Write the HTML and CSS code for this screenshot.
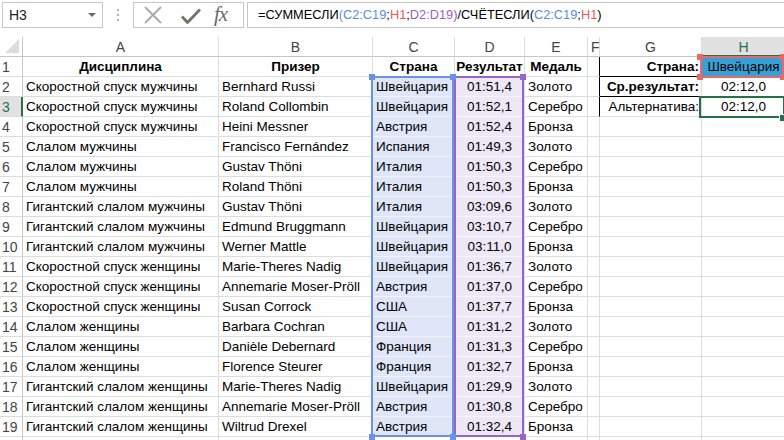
FILE: index.html
```html
<!DOCTYPE html>
<html lang="ru">
<head>
    <meta charset="UTF-8">
    <title>Олимпиада 1972 — горные лыжи</title>
    <link rel="stylesheet" href="styles.css">
</head>
<body>
    <div class="toolbar">
        <div class="namebox">
            <span>H3</span>
            <span class="caret"></span>
        </div>
        <div class="grip">
            <svg width="4" height="14" viewBox="0 0 4 14"><circle cx="2" cy="2" r="1" fill="#9a9a9a"/><circle cx="2" cy="7" r="1" fill="#9a9a9a"/><circle cx="2" cy="12" r="1" fill="#9a9a9a"/></svg>
        </div>
        <div class="fx-buttons">
            <svg class="btn-cancel" width="18" height="18" viewBox="0 0 18 18"><path d="M1 1 L17 17 M17 1 L1 17" stroke="#a8a8a8" stroke-width="1.8" fill="none"/></svg>
            <svg class="btn-enter" width="20" height="16" viewBox="0 0 20 16"><path d="M1 8.5 L6.5 14.5 L19 1.5" stroke="#6f7562" stroke-width="2.8" fill="none" stroke-linejoin="round"/></svg>
            <span class="fx">fx</span>
        </div>
        <div class="formula">=СУММЕСЛИ<span class="p-blue">(</span><span class="ref-blue">C2:C19</span>;<span class="ref-red">H1</span>;<span class="ref-purple">D2:D19</span><span class="p-purple">)</span>/СЧЁТЕСЛИ(<span class="ref-blue">C2:C19</span>;<span class="ref-red">H1</span>)</div>
    </div>

    <div class="sheet">
        <div class="grid" id="grid"></div>

        <!-- подсветка ссылок из формулы -->
        <div class="range range-c"></div>
        <div class="range range-d"></div>
        <div class="range range-h1"></div>
        <div class="range range-sel"></div>

        <div class="handle h-blue" style="left:369px;top:37px"></div>
        <div class="handle h-blue" style="left:450px;top:37px"></div>
        <div class="handle h-blue" style="left:369px;top:397px"></div>
        <div class="handle h-blue" style="left:450px;top:397px"></div>
        <div class="handle h-purple" style="left:520px;top:37px"></div>
        <div class="handle h-purple" style="left:520px;top:397px"></div>
        <div class="handle h-red" style="left:697px;top:17px"></div>
        <div class="handle h-red" style="left:780px;top:17px"></div>
        <div class="handle h-red" style="left:697px;top:37px"></div>
        <div class="handle h-red" style="left:780px;top:37px"></div>
        <div class="handle fill-handle"></div>
    </div>

    <script>
        const cols = ['A', 'B', 'C', 'D', 'E', 'F', 'G', 'H'];
        const data = [
            ['Скоростной спуск мужчины', 'Bernhard Russi', 'Швейцария', '01:51,4', 'Золото'],
            ['Скоростной спуск мужчины', 'Roland Collombin', 'Швейцария', '01:52,1', 'Серебро'],
            ['Скоростной спуск мужчины', 'Heini Messner', 'Австрия', '01:52,4', 'Бронза'],
            ['Слалом мужчины', 'Francisco Fernández', 'Испания', '01:49,3', 'Золото'],
            ['Слалом мужчины', 'Gustav Thöni', 'Италия', '01:50,3', 'Серебро'],
            ['Слалом мужчины', 'Roland Thöni', 'Италия', '01:50,3', 'Бронза'],
            ['Гигантский слалом мужчины', 'Gustav Thöni', 'Италия', '03:09,6', 'Золото'],
            ['Гигантский слалом мужчины', 'Edmund Bruggmann', 'Швейцария', '03:10,7', 'Серебро'],
            ['Гигантский слалом мужчины', 'Werner Mattle', 'Швейцария', '03:11,0', 'Бронза'],
            ['Скоростной спуск женщины', 'Marie-Theres Nadig', 'Швейцария', '01:36,7', 'Золото'],
            ['Скоростной спуск женщины', 'Annemarie Moser-Pröll', 'Австрия', '01:37,0', 'Серебро'],
            ['Скоростной спуск женщины', 'Susan Corrock', 'США', '01:37,7', 'Бронза'],
            ['Слалом женщины', 'Barbara Cochran', 'США', '01:31,2', 'Золото'],
            ['Слалом женщины', 'Danièle Debernard', 'Франция', '01:31,3', 'Серебро'],
            ['Слалом женщины', 'Florence Steurer', 'Франция', '01:32,7', 'Бронза'],
            ['Гигантский слалом женщины', 'Marie-Theres Nadig', 'Швейцария', '01:29,9', 'Золото'],
            ['Гигантский слалом женщины', 'Annemarie Moser-Pröll', 'Австрия', '01:30,8', 'Серебро'],
            ['Гигантский слалом женщины', 'Wiltrud Drexel', 'Австрия', '01:32,4', 'Бронза']
        ];
        const side = {
            1: ['Страна:', 'Швейцария'],
            2: ['Ср.результат:', '02:12,0'],
            3: ['Альтернатива:', '02:12,0']
        };

        const grid = document.getElementById('grid');

        function addCell(text, cls) {
            const div = document.createElement('div');
            div.className = 'cell ' + cls;
            div.textContent = text;
            grid.appendChild(div);
        }

        // заголовки столбцов
        addCell('', 'corner');
        cols.forEach(c => addCell(c, 'colhead' + (c === 'H' ? ' active' : '')));

        // строка 1 — шапка таблицы
        const head = ['Дисциплина', 'Призер', 'Страна', 'Результат', 'Медаль'];

        for (let r = 1; r <= 20; r++) {
            // 20-я строка видна только краем, номер не показываем
            addCell(r < 20 ? String(r) : '', 'rowhead' + (r === 3 ? ' active' : ''));
            const row = r === 1 ? head : (data[r - 2] || ['', '', '', '', '']);
            row.forEach((val, i) => {
                let cls = 'col-' + cols[i].toLowerCase();
                if (r === 1) cls += ' bold';
                else if (r <= 19 && i === 2) cls += ' in-c';
                else if (r <= 19 && i === 3) cls += ' in-d';
                addCell(val, cls);
            });
            const s = side[r];
            addCell('', 'col-f' + (s ? ' box-left' : ''));
            addCell(s ? s[0] : '', 'col-g' + (s ? ' g' + r : ''));
            addCell(s ? s[1] : '', 'col-h' + (s ? ' h' + r : ''));
        }
    </script>
</body>
</html>
```

FILE: styles.css
```css
body {
    margin: 0;
    width: 784px;
    height: 440px;
    overflow: hidden;
    background: #fff;
    font-family: "Liberation Sans", Arial, sans-serif;
    font-size: 13.5px;
    color: #000;
}

/* строка формул */
.toolbar {
    display: flex;
    align-items: center;
    height: 37px;
    padding: 0 0 8px 2px;
    box-sizing: border-box;
}

.namebox {
    display: flex;
    align-items: center;
    justify-content: space-between;
    width: 101px;
    height: 26px;
    padding: 0 6px 0 6px;
    border: 1px solid #c6c6c6;
    box-sizing: border-box;
    font-size: 14px;
    color: #222;
}

.caret {
    width: 0;
    height: 0;
    border-left: 4px solid transparent;
    border-right: 4px solid transparent;
    border-top: 4px solid #6a6a6a;
}

.grip {
    display: flex;
    justify-content: center;
    width: 30px;
}

.fx-buttons {
    display: flex;
    align-items: center;
    width: 111px;
    height: 26px;
    border: 1px solid #c6c6c6;
    box-sizing: border-box;
}

.btn-cancel {
    margin-left: 10px;
}

.btn-enter {
    margin-left: 19px;
    margin-top: 2px;
}

.fx {
    margin-left: 13px;
    font-family: "Liberation Serif", "Times New Roman", serif;
    font-style: italic;
    font-size: 21px;
    color: #6a6a6a;
    letter-spacing: -1px;
}

.formula {
    flex: 1;
    height: 26px;
    margin-left: 3px;
    padding-left: 10px;
    border: 1px solid #c6c6c6;
    border-right: none;
    box-sizing: border-box;
    line-height: 24px;
    font-size: 12.8px;
    white-space: nowrap;
}

.ref-blue { color: #5a8ae6; }
.ref-red { color: #e8585b; }
.ref-purple { color: #9a5fcf; }
.p-blue { color: #6d8fc9; }
.p-purple { color: #8a62b4; }

/* лист */
.sheet {
    position: relative;
}

.grid {
    display: grid;
    grid-template-columns: 23px 196px 154px 82px 70px 63px 12px 102px 84px;
    grid-auto-rows: 20px;
}

.cell {
    border-right: 1px solid #dadcdd;
    border-bottom: 1px solid #dadcdd;
    box-sizing: border-box;
    padding: 0 3px;
    line-height: 20px;
    white-space: nowrap;
}

.corner {
    position: relative;
    border-color: #c6c6c6;
}

.corner::after {
    content: "";
    position: absolute;
    right: 3px;
    bottom: 3px;
    border-left: 14px solid transparent;
    border-bottom: 14px solid #dcdcdc;
}

.colhead {
    text-align: center;
    font-size: 14px;
    color: #444;
    border-bottom-color: #c6c6c6;
}

.rowhead {
    padding-left: 2px;
    font-size: 14px;
    color: #444;
    border-right-color: #c6c6c6;
}

.colhead.active {
    background: #e1e1e1;
    color: #217346;
    border-bottom: 2px solid #217346;
}

.rowhead.active {
    background: #e1e1e1;
    color: #217346;
    border-right: 2px solid #217346;
}

.bold {
    font-weight: bold;
    text-align: center;
    padding: 0;
}

.col-d {
    text-align: center;
}

.in-c {
    background: #dfe6f8;
    border-bottom-color: #f3f5fc;
}

.in-d {
    background: #ede8f6;
    border-bottom-color: #f7f4fb;
}

/* блок с расчётом */
.col-g {
    text-align: right;
    padding-right: 2px;
}

.col-h {
    text-align: center;
}

.box-left {
    border-right-color: #000;
}

.g1 {
    font-weight: bold;
    border-bottom-color: #000;
}

.g2 {
    font-weight: bold;
    border-bottom-color: #000;
}

.h1 {
    background: #38a0d6;
}

.h2 {
    border-bottom-color: #000;
    border-right-color: #000;
}

.range {
    position: absolute;
    border: 2px solid;
    box-sizing: border-box;
}

.range-c {
    left: 371px;
    top: 39px;
    width: 83px;
    height: 361px;
    border-color: #6a92e8;
}

.range-d {
    left: 454px;
    top: 39px;
    width: 70px;
    height: 361px;
    border-color: #9466ca;
}

.range-h1 {
    left: 700px;
    top: 19px;
    width: 84px;
    height: 22px;
    border-color: #e8696b;
}

.range-sel {
    left: 699px;
    top: 59px;
    width: 86px;
    height: 22px;
    border-color: #217346;
}

.handle {
    position: absolute;
    width: 6px;
    height: 6px;
}

.h-blue { background: #6a92e8; }
.h-purple { background: #9466ca; }
.h-red { background: #e8696b; }

.fill-handle {
    left: 779px;
    top: 77px;
    background: #217346;
    border: 1px solid #fff;
}
```
